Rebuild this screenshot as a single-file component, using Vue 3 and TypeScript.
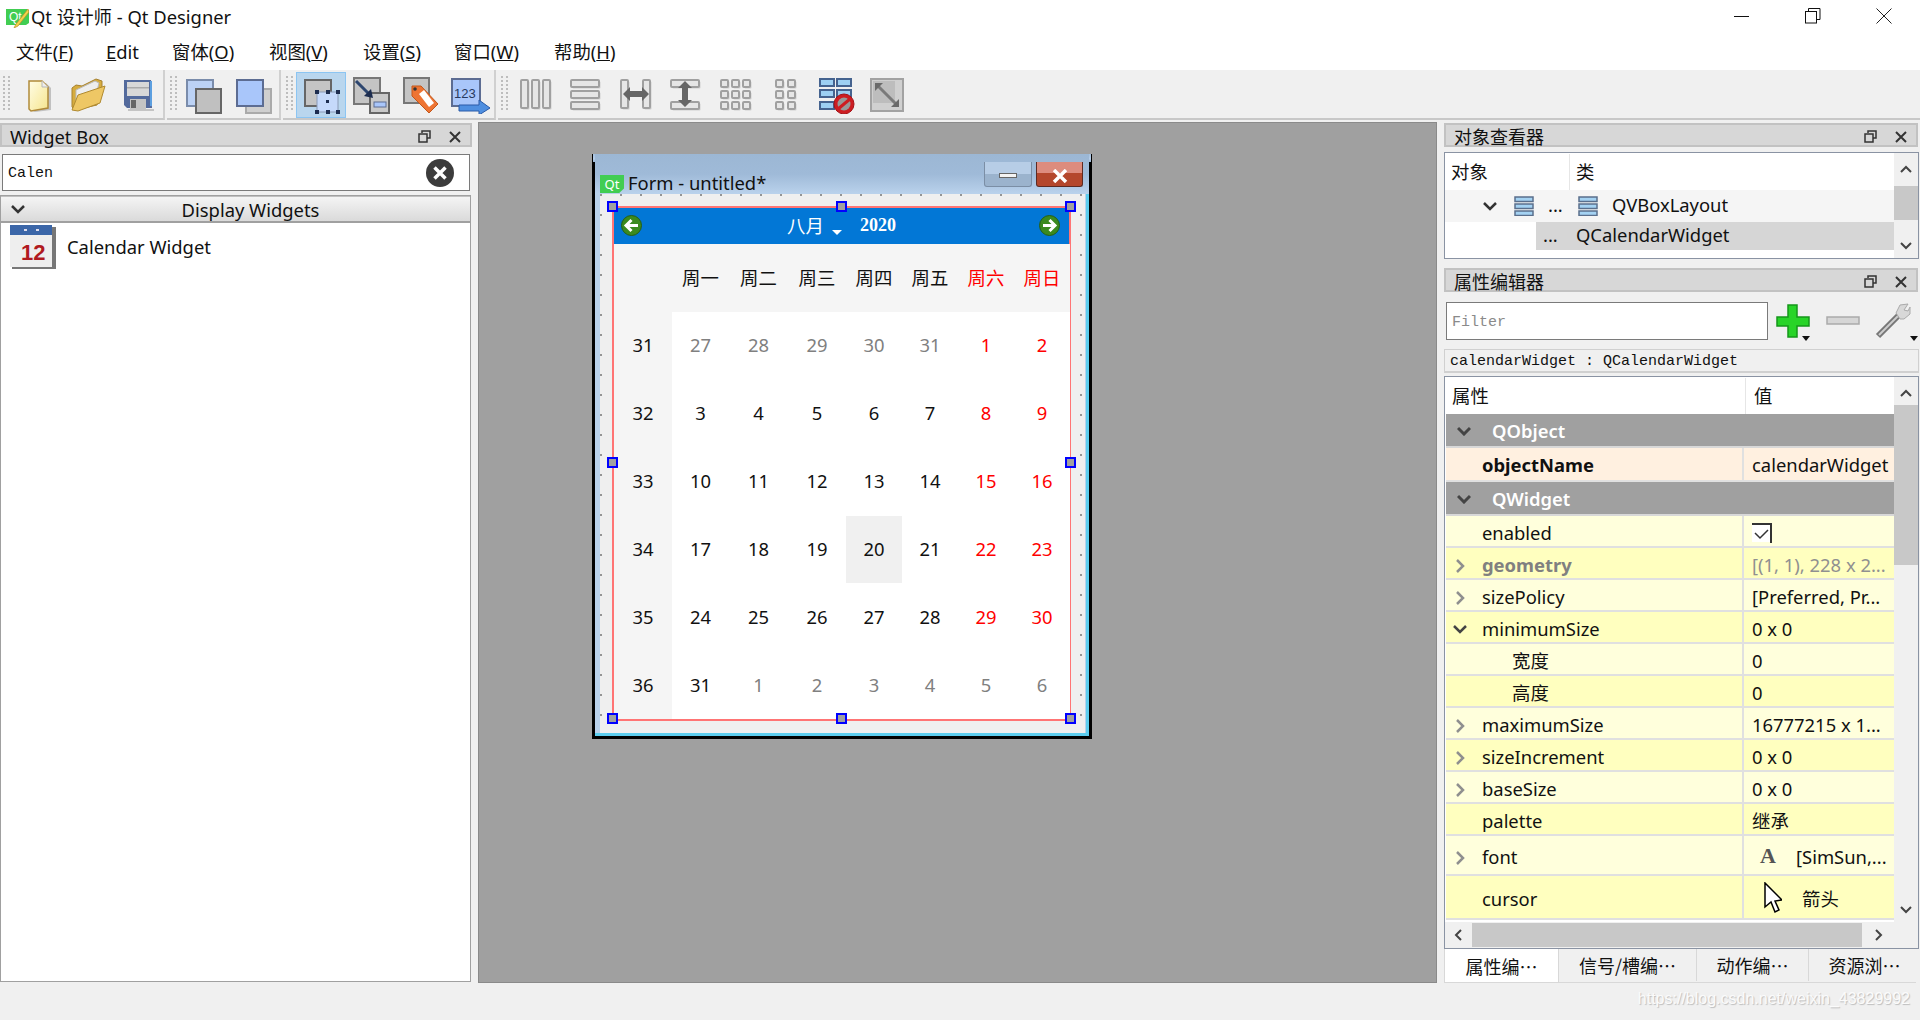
<template>
  <div class="app">
    <header class="titlebar">
      <svg class="app-icon" width="24" height="22" viewBox="0 0 24 22">
        <path d="M1 3h21l2 2v12l-3 2H1z" fill="#41cd52" />
        <text x="4" y="15" font-size="12" fill="#fff" font-family="Liberation Sans, sans-serif">Qt</text>
        <path d="M23 3l-12 15-2 4 4-2L24 6z" fill="#f3d24a" stroke="#b98a2a" stroke-width=".7" />
      </svg>
      <span class="title-text">Qt 设计师 - Qt Designer</span>
      <div class="win-buttons">
        <svg width="16" height="16" viewBox="0 0 16 16"><path d="M0 8.500h15" stroke="#111" stroke-width="1" /></svg>
        <svg width="16" height="16" viewBox="0 0 16 16" fill="none" stroke="#111"><path d="M3.500 3.500V.5h11.500v11h-3" /><rect x=".5" y="3.500" width="11" height="11.500" fill="#fff" /></svg>
        <svg width="16" height="16" viewBox="0 0 16 16"><path d="M.5.5l15 15M15.500.5l-15 15" stroke="#222" stroke-width="1" /></svg>
      </div>
    </header>

    <nav class="menubar">
      <span v-for="m in menus" :key="m.pre + m.key" class="menu-item" :style="{ width: m.w + 'px' }">{{ m.pre }}<u>{{ m.key }}</u>{{ m.post }}</span>
    </nav>

    <div class="toolbars">
      <div class="toolgroup g1">
        <i class="grip"></i>
        <div class="tool">
          <svg width="34" height="38" viewBox="0 0 34 38">
            <defs>
              <linearGradient id="paper" x1="0" y1="0" x2="1" y2="1"><stop offset="0" stop-color="#fffde6" /><stop offset="1" stop-color="#f6e58d" /></linearGradient>
            </defs>
            <path d="M10 6h13l5 5v22l-16 2-2-1z" fill="#888" opacity=".45" transform="translate(2 1)" />
            <path d="M8 5h13l6 6v21l-17 3-2-2z" fill="url(#paper)" stroke="#b08a3a" stroke-width="1.500" />
            <path d="M21 5v6h6" fill="#eee" stroke="#b7b7b7" />
          </svg>
        </div>
        <div class="tool">
          <svg width="38" height="38" viewBox="0 0 38 38">
            <path d="M3 12l4-3 6 1 14-7 6 2v8l-5 16-22 5-3-3z" fill="#d6ac3f" stroke="#a78230" />
            <path d="M7 28V14l19-9 4 2-3 12z" fill="#eee" stroke="#bbb" />
            <path d="M3 34l6-15 27-9-5 17-22 8z" fill="#eec765" stroke="#b08a30" />
          </svg>
        </div>
        <div class="tool">
          <svg width="34" height="38" viewBox="0 0 34 38">
            <path d="M3 4h27l1 28H6l-3-3z" fill="#536a9c" />
            <rect x="6" y="6" width="22" height="14" fill="#d8d8d8" />
            <rect x="6" y="11" width="22" height="1.500" fill="#aaa" />
            <rect x="9" y="23" width="16" height="10" fill="#c4c4c4" />
            <rect x="10" y="24" width="5" height="8" fill="#666" />
            <path d="M29 5h2v25h-2z" fill="#5c9fe0" />
            <path d="M7 34h26" stroke="#999" stroke-width="2" opacity=".5" />
          </svg>
        </div>
      </div>
      <div class="toolgroup g2">
        <i class="grip"></i>
        <div class="tool">
          <svg width="38" height="38" viewBox="0 0 38 38">
            <rect x="3" y="4" width="26" height="26" fill="#bcd2f5" stroke="#7a8cab" stroke-width="2" />
            <rect x="12" y="13" width="25" height="24" fill="#c0c0c0" stroke="#666" stroke-width="2" />
          </svg>
        </div>
        <div class="tool">
          <svg width="38" height="38" viewBox="0 0 38 38">
            <rect x="12" y="13" width="25" height="24" fill="#cfcfcf" stroke="#aaa" stroke-width="2" />
            <rect x="3" y="4" width="26" height="26" fill="#a9c6fa" stroke="#5c6c92" stroke-width="2" />
          </svg>
        </div>
      </div>
      <div class="toolgroup g3">
        <i class="grip"></i>
        <div class="tool active">
          <svg width="38" height="38" viewBox="0 0 38 38">
            <rect x="3" y="4" width="26" height="26" fill="#c4c4c4" stroke="#666" stroke-width="2" />
            <rect x="15" y="16" width="21" height="20" fill="#c5d9fb" stroke="#8a9ab6" />
            <g fill="#1d2d50">
              <rect x="13" y="14" width="4" height="4" /><rect x="24" y="14" width="4" height="4" /><rect x="34" y="14" width="4" height="4" />
              <rect x="13" y="34" width="4" height="4" /><rect x="24" y="34" width="4" height="4" /><rect x="34" y="34" width="4" height="4" />
              <rect x="24" y="24" width="3" height="3" />
            </g>
          </svg>
        </div>
        <div class="tool">
          <svg width="38" height="38" viewBox="0 0 38 38">
            <rect x="2" y="2" width="26" height="26" fill="#c4c4c4" stroke="#777" stroke-width="2" />
            <rect x="18" y="17" width="19" height="20" fill="#c9c9c9" stroke="#666" stroke-width="2" />
            <rect x="22" y="26" width="12" height="5" fill="#a9c6fa" stroke="#5c6c92" />
            <path d="M4 5l13 13" stroke="#2d466f" stroke-width="3" />
            <path d="M12 20l9 2-2-9z" fill="#1d2d50" />
          </svg>
        </div>
        <div class="tool">
          <svg width="38" height="38" viewBox="0 0 38 38">
            <rect x="2" y="2" width="25" height="25" fill="#c4c4c4" stroke="#777" stroke-width="2" />
            <path d="M10 10h9l17 18-9 9-17-17z" fill="#ee7433" stroke="#c2571b" />
            <path d="M17 18l5-4 10 13-5 4z" fill="#fff" />
            <circle cx="13" cy="13" r="1.800" fill="#333" />
          </svg>
        </div>
        <div class="tool">
          <svg width="40" height="38" viewBox="0 0 40 38">
            <rect x="1" y="3" width="28" height="27" fill="#a9c6fa" stroke="#5c6c92" stroke-width="2" />
            <text x="3" y="22" font-size="13" font-family="Liberation Sans, sans-serif" fill="#283a5e">123</text>
            <path d="M8 29h20v-5l11 8-11 7v-4H8z" fill="#4f8fe0" stroke="#2a5ba8" />
          </svg>
        </div>
      </div>
      <div class="toolgroup g4">
        <i class="grip"></i>
        <div v-for="(ic, i) in layoutIcons" :key="i" class="tool">
          <svg width="36" height="36" viewBox="0 0 36 36">
            <g v-for="(r, j) in ic.rects" :key="j">
              <rect :x="r[0] + 1.500" :y="r[1] + 1.500" :width="r[2]" :height="r[3]" rx="1" fill="#cfcfcf" />
              <rect :x="r[0]" :y="r[1]" :width="r[2]" :height="r[3]" rx="1" fill="#e6e6e6" stroke="#a0a0a0" stroke-width="2" />
            </g>
            <path v-if="ic.arrow" :d="ic.arrow" fill="#666" />
          </svg>
        </div>
        <div class="tool">
          <svg width="38" height="38" viewBox="0 0 38 38">
            <g fill="#9dd0f3" stroke="#45638f" stroke-width="2">
              <rect x="3" y="3" width="14" height="7" /><rect x="20" y="3" width="14" height="7" />
              <rect x="3" y="14" width="14" height="7" /><rect x="20" y="14" width="14" height="7" />
              <rect x="3" y="26" width="14" height="7" /><rect x="20" y="26" width="14" height="7" />
            </g>
            <circle cx="27" cy="28" r="10" fill="#cd1d22" stroke="#a51217" />
            <circle cx="27" cy="28" r="6.500" fill="#999" />
            <path d="M21 33l12-10" stroke="#cd1d22" stroke-width="3" />
          </svg>
        </div>
        <div class="tool wide">
          <svg width="36" height="36" viewBox="0 0 36 36">
            <rect x="2" y="2" width="32" height="32" fill="#d0d0d0" stroke="#a2a2a2" stroke-width="2" />
            <rect x="4" y="4" width="22" height="22" fill="#bdbdbd" />
            <path d="M7 7l22 22" stroke="#7a7a7a" stroke-width="3" />
            <path d="M6 6h8l-8 8zM30 30h-8l8-8z" fill="#6a6a6a" />
          </svg>
        </div>
      </div>
    </div>

    <main class="workspace">
      <section class="dock left">
        <div class="dock-title">
          <span>Widget Box</span>
          <span class="dock-actions">
            <svg width="13" height="13" viewBox="0 0 13 13" fill="none" stroke="#333" stroke-width="1.500"><path d="M4 3V1h8v7H9" /><rect x="1" y="4" width="8" height="8" /></svg>
            <svg width="12" height="12" viewBox="0 0 12 12"><path d="M1 1l10 10M11 1L1 11" stroke="#333" stroke-width="2" /></svg>
          </span>
        </div>
        <div class="search">
          <span>Calen</span>
          <svg class="clear" width="28" height="28" viewBox="0 0 28 28">
            <circle cx="14" cy="14" r="14" fill="#3c3c3c" />
            <path d="M8.500 8.500l11 11M19.500 8.500l-11 11" stroke="#fff" stroke-width="3.500" />
          </svg>
        </div>
        <div class="widget-list">
          <div class="category">
            <svg class="chev" width="14" height="10" viewBox="0 0 14 10"><path d="M1 2l6 6 6-6" fill="none" stroke="#333" stroke-width="2.500" /></svg>
            <span>Display Widgets</span>
          </div>
          <div class="widget-item">
            <svg width="46" height="44" viewBox="0 0 46 44">
              <rect x="2" y="2" width="44" height="42" fill="#777" />
              <rect x="0" y="0" width="42" height="42" fill="#eee" />
              <rect x="0" y="0" width="42" height="10" fill="#3b66a8" />
              <rect x="14" y="4" width="3" height="2" fill="#dde" /><rect x="26" y="4" width="3" height="2" fill="#dde" />
              <text x="11" y="35" font-size="22" font-weight="700" fill="#b01a1f" font-family="Liberation Sans, sans-serif">12</text>
            </svg>
            <span class="widget-name">Calendar Widget</span>
          </div>
        </div>
      </section>

      <section class="canvas">
        <div class="form">
          <div class="form-title">
            <span class="qt-badge">Qt</span>
            <span class="form-name">Form - untitled*</span>
            <div class="form-buttons">
              <span class="fbtn min"><i></i></span>
              <span class="fbtn close">
                <svg width="18" height="14" viewBox="0 0 18 14"><path d="M3 1l12 12M15 1L3 13" stroke="#fff" stroke-width="3.500" /></svg>
              </span>
            </div>
          </div>
          <div class="form-body">
            <div class="calendar">
              <div class="cal-nav">
                <svg class="nav-arrow" width="21" height="21" viewBox="0 0 21 21">
                  <circle cx="10.500" cy="10.500" r="10" fill="#3b8a1e" stroke="#265f14" />
                  <path d="M17 10.500H6M10.500 5l-5.500 5.500 5.500 5.500" fill="none" stroke="#fff" stroke-width="3" />
                </svg>
                <div class="nav-center">
                  <span class="month">八月</span>
                  <i class="caret"></i>
                  <span class="year">2020</span>
                </div>
                <svg class="nav-arrow" width="21" height="21" viewBox="0 0 21 21">
                  <circle cx="10.500" cy="10.500" r="10" fill="#3b8a1e" stroke="#265f14" />
                  <path d="M4 10.500h11M10.500 5l5.500 5.500-5.500 5.500" fill="none" stroke="#fff" stroke-width="3" />
                </svg>
              </div>
              <div class="cal-grid">
                <div class="head"></div>
                <div v-for="(d, i) in weekDays" :key="d" class="head" :class="{ red: i > 4 }">{{ d }}</div>
                <template v-for="row in calendarRows" :key="row.week">
                  <div class="week">{{ row.week }}</div>
                  <div
                    v-for="(c, i) in row.days"
                    :key="i"
                    class="day"
                    :class="{ muted: c.off, red: i > 4 && !c.off, today: c.n === 20 }"
                  >{{ c.n }}</div>
                </template>
              </div>
            </div>
            <i v-for="h in handles" :key="h.k" class="handle" :class="h.k"></i>
          </div>
        </div>
      </section>

      <section class="dock right">
        <div class="dock-title">
          <span>对象查看器</span>
          <span class="dock-actions">
            <svg width="13" height="13" viewBox="0 0 13 13" fill="none" stroke="#333" stroke-width="1.500"><path d="M4 3V1h8v7H9" /><rect x="1" y="4" width="8" height="8" /></svg>
            <svg width="12" height="12" viewBox="0 0 12 12"><path d="M1 1l10 10M11 1L1 11" stroke="#333" stroke-width="2" /></svg>
          </span>
        </div>
        <div class="inspector">
          <div class="tree">
            <div class="tree-head"><span class="th-a">对象</span><span class="th-b">类</span></div>
            <div class="tree-row alt">
              <svg class="tree-chev" width="14" height="10" viewBox="0 0 14 10"><path d="M1 2l6 6 6-6" fill="none" stroke="#333" stroke-width="2.500" /></svg>
              <svg class="vbox one" width="20" height="20" viewBox="0 0 20 20"><g fill="#a4d2f2" stroke="#5a6f8c" stroke-width="1.500"><rect x="1" y="1" width="18" height="4.500" /><rect x="1" y="8" width="18" height="4.500" /><rect x="1" y="15" width="18" height="4.500" /></g></svg>
              <span class="dots">...</span>
              <svg class="vbox two" width="20" height="20" viewBox="0 0 20 20"><g fill="#a4d2f2" stroke="#5a6f8c" stroke-width="1.500"><rect x="1" y="1" width="18" height="4.500" /><rect x="1" y="8" width="18" height="4.500" /><rect x="1" y="15" width="18" height="4.500" /></g></svg>
              <span>QVBoxLayout</span>
            </div>
            <div class="tree-row sel"><span class="dots">...</span><span>QCalendarWidget</span></div>
          </div>
          <div class="vscroll">
            <svg width="12" height="8" viewBox="0 0 12 8"><path d="M1 7l5-5 5 5" fill="none" stroke="#444" stroke-width="2" /></svg>
            <div class="track small"><i class="thumb small"></i></div>
            <svg width="12" height="8" viewBox="0 0 12 8"><path d="M1 1l5 5 5-5" fill="none" stroke="#444" stroke-width="2" /></svg>
          </div>
        </div>

        <div class="dock-title second">
          <span>属性编辑器</span>
          <span class="dock-actions">
            <svg width="13" height="13" viewBox="0 0 13 13" fill="none" stroke="#333" stroke-width="1.500"><path d="M4 3V1h8v7H9" /><rect x="1" y="4" width="8" height="8" /></svg>
            <svg width="12" height="12" viewBox="0 0 12 12"><path d="M1 1l10 10M11 1L1 11" stroke="#333" stroke-width="2" /></svg>
          </span>
        </div>
        <div class="filter-row">
          <div class="filter">Filter</div>
          <span class="ficon">
            <svg width="34" height="34" viewBox="0 0 34 34"><path d="M12 1h9v12h12v9H21v11h-9V22H1v-9h11z" fill="#28d428" stroke="#14961a" stroke-width="1.500" /></svg>
            <i class="drop"></i>
          </span>
          <span class="ficon">
            <svg width="34" height="34" viewBox="0 0 34 34"><rect x="1" y="13" width="32" height="7" fill="#d6d6d6" stroke="#aaa" stroke-width="1.500" /></svg>
          </span>
          <span class="ficon">
            <svg width="36" height="36" viewBox="0 0 36 36">
              <path d="M3 33L24 12" stroke="#777" stroke-width="6" />
              <path d="M4 32L23 13" stroke="#ccc" stroke-width="2" />
              <path d="M21 10l4-8 8-1-4 6 4 1 2-4v7l-6 5h-4z" fill="#d8d8d8" stroke="#aaa" />
            </svg>
            <i class="drop"></i>
          </span>
        </div>
        <div class="object-label">calendarWidget : QCalendarWidget</div>
        <div class="props">
          <div class="props-main">
            <div class="props-view">
              <div class="props-head"><span class="ph-a">属性</span><span class="ph-b">值</span></div>
              <template v-for="row in propRows" :key="row.name">
                <div v-if="row.group" class="prow group">
                  <svg class="p-arrow" width="14" height="10" viewBox="0 0 14 10"><path d="M1 2l6 6 6-6" fill="none" stroke="#444" stroke-width="3" /></svg>
                  <span class="gname">{{ row.name }}</span>
                </div>
                <div v-else class="prow" :class="[row.tone, row.cls]">
                  <div class="pname" :class="{ indent: row.indent }">
                    <svg v-if="row.arrow === 'right'" class="p-arrow" width="10" height="14" viewBox="0 0 10 14"><path d="M2 1l6 6-6 6" fill="none" stroke="#8f8f8f" stroke-width="2.500" /></svg>
                    <svg v-if="row.arrow === 'down'" class="p-arrow down" width="14" height="10" viewBox="0 0 14 10"><path d="M1 2l6 6 6-6" fill="none" stroke="#444" stroke-width="2.500" /></svg>
                    <span>{{ row.name }}</span>
                  </div>
                  <div class="pvalue">
                    <svg v-if="row.icon === 'check'" class="check-glyph" width="20" height="20" viewBox="0 0 20 20">
                      <rect width="19" height="19" fill="#fff" />
                      <path d="M0 1h19v19" fill="none" stroke="#333" stroke-width="2" />
                      <path d="M3 10l5 5 8-8" fill="none" stroke="#333" stroke-width="1.500" />
                    </svg>
                    <span v-if="row.icon === 'font'" class="font-glyph">A</span>
                    <svg v-if="row.icon === 'cursor'" class="cursor-glyph" width="18" height="32" viewBox="0 0 18 32">
                      <path d="M1 1v24l6-5 4 10 4-2-4-9 7-1z" fill="#fff" stroke="#000" stroke-width="1.500" />
                    </svg>
                    <span v-if="row.value">{{ row.value }}</span>
                  </div>
                </div>
              </template>
            </div>
            <div class="vscroll tall">
              <svg width="12" height="8" viewBox="0 0 12 8"><path d="M1 7l5-5 5 5" fill="none" stroke="#444" stroke-width="2" /></svg>
              <div class="track"><i class="thumb"></i></div>
              <svg width="12" height="8" viewBox="0 0 12 8"><path d="M1 1l5 5 5-5" fill="none" stroke="#444" stroke-width="2" /></svg>
            </div>
          </div>
          <div class="hscroll">
            <svg width="8" height="12" viewBox="0 0 8 12"><path d="M7 1L2 6l5 5" fill="none" stroke="#444" stroke-width="2" /></svg>
            <div class="hthumb"></div>
            <svg width="8" height="12" viewBox="0 0 8 12"><path d="M1 1l5 5-5 5" fill="none" stroke="#444" stroke-width="2" /></svg>
          </div>
        </div>
        <div class="tabs">
          <span v-for="(t, i) in tabs" :key="t.label" class="tab" :class="{ on: i === 0 }" :style="{ width: t.w + 'px' }">{{ t.label }}</span>
        </div>
      </section>
    </main>

    <footer class="statusbar">
      <span class="watermark">https://blog.csdn.net/weixin_43829992</span>
    </footer>
  </div>
</template>

<script setup lang="ts">
interface PropRow {
  name: string;
  value?: string;
  group?: boolean;
  tone?: string;
  cls?: string;
  arrow?: 'right' | 'down';
  indent?: boolean;
  icon?: string;
}

const menus = [
  { pre: '文件(', key: 'F', post: ')', w: 90 },
  { pre: '', key: 'E', post: 'dit', w: 66 },
  { pre: '窗体(', key: 'O', post: ')', w: 97 },
  { pre: '视图(', key: 'V', post: ')', w: 94 },
  { pre: '设置(', key: 'S', post: ')', w: 91 },
  { pre: '窗口(', key: 'W', post: ')', w: 100 },
  { pre: '帮助(', key: 'H', post: ')', w: 80 },
];

const layoutIcons: { rects: number[][]; arrow?: string }[] = [
  { rects: [[3, 3, 7, 28], [14, 3, 7, 28], [25, 3, 7, 28]] },
  { rects: [[3, 3, 28, 7], [3, 14, 28, 7], [3, 25, 28, 7]] },
  { rects: [[3, 3, 7, 28], [25, 3, 7, 28]], arrow: 'M5 17l7-7v4h12v-4l7 7-7 7v-4H12v4z' },
  { rects: [[3, 3, 28, 7], [3, 25, 28, 7]], arrow: 'M17 4l7 7h-4v12h4l-7 7-7-7h4V11h-4z' },
  { rects: [[3, 3, 7, 7], [14, 3, 7, 7], [25, 3, 7, 7], [3, 14, 7, 7], [14, 14, 7, 7], [25, 14, 7, 7], [3, 25, 7, 7], [14, 25, 7, 7], [25, 25, 7, 7]] },
  { rects: [[8, 3, 7, 7], [20, 3, 7, 7], [8, 14, 7, 7], [20, 14, 7, 7], [8, 25, 7, 7], [20, 25, 7, 7]] },
];

const weekDays = ['周一', '周二', '周三', '周四', '周五', '周六', '周日'];

const mk = (nums: number[], offBefore: number, offAfter = 8) =>
  nums.map((n, i) => ({ n, off: i < offBefore || i >= offAfter }));

const calendarRows = [
  { week: 31, days: [...mk([27, 28, 29, 30, 31], 5), ...mk([1, 2], 0)] },
  { week: 32, days: mk([3, 4, 5, 6, 7, 8, 9], 0) },
  { week: 33, days: mk([10, 11, 12, 13, 14, 15, 16], 0) },
  { week: 34, days: mk([17, 18, 19, 20, 21, 22, 23], 0) },
  { week: 35, days: mk([24, 25, 26, 27, 28, 29, 30], 0) },
  { week: 36, days: mk([31, 1, 2, 3, 4, 5, 6], 0, 1) },
];

const handles = ['tl', 'tm', 'tr', 'ml', 'mr', 'bl', 'bm', 'br'].map((k) => ({ k }));

const propRows: PropRow[] = [
  { name: 'QObject', group: true },
  { name: 'objectName', value: 'calendarWidget', tone: 'peach', cls: 'strong' },
  { name: 'QWidget', group: true },
  { name: 'enabled', tone: 'light', icon: 'check' },
  { name: 'geometry', value: '[(1, 1), 228 x 2...', tone: 'dark', cls: 'disabled', arrow: 'right' },
  { name: 'sizePolicy', value: '[Preferred, Pr...', tone: 'light', arrow: 'right' },
  { name: 'minimumSize', value: '0 x 0', tone: 'dark', arrow: 'down' },
  { name: '宽度', value: '0', tone: 'light', indent: true },
  { name: '高度', value: '0', tone: 'dark', indent: true },
  { name: 'maximumSize', value: '16777215 x 1...', tone: 'light', arrow: 'right' },
  { name: 'sizeIncrement', value: '0 x 0', tone: 'dark', arrow: 'right' },
  { name: 'baseSize', value: '0 x 0', tone: 'light', arrow: 'right' },
  { name: 'palette', value: '继承', tone: 'dark' },
  { name: 'font', value: '[SimSun,...', tone: 'light', cls: 'tall-font', arrow: 'right', icon: 'font' },
  { name: 'cursor', value: '箭头', tone: 'dark', cls: 'tall-cursor', icon: 'cursor' },
];

const tabs = [
  { label: '属性编…', w: 115 },
  { label: '信号/槽编…', w: 138 },
  { label: '动作编…', w: 112 },
  { label: '资源浏…', w: 107 },
];
</script>

<style scoped>
.app {
  width: 1920px;
  height: 1020px;
  display: flex;
  flex-direction: column;
  background: #f0f0f0;
  font-family: "Noto Sans", "Noto Sans CJK SC", sans-serif;
  font-size: 18.4px;
  color: #111;
  overflow: hidden;
}

.titlebar {
  height: 34px;
  flex: none;
  display: flex;
  align-items: center;
  background: #fff;
  padding-left: 5px;
}
.app-icon { margin-right: 2px; }
.title-text { line-height: 34px; }
.win-buttons {
  margin-left: auto;
  display: flex;
  gap: 55px;
  padding-right: 28px;
  margin-top: -2px;
}

.menubar {
  height: 36px;
  flex: none;
  display: flex;
  align-items: center;
  background: #fff;
  padding: 0 0 2px 16px;
  box-sizing: border-box;
}
.menu-item { display: block; flex: none; }

.toolbars {
  height: 50px;
  flex: none;
  display: flex;
  gap: 2px;
  background: #f0f0f0;
}
.toolgroup {
  display: flex;
  align-items: center;
  position: relative;
  box-sizing: border-box;
  padding-top: 2px;
  border-bottom: 2px solid #c8c8c8;
  border-right: 2px solid #d0d0d0;
}
.g1 { width: 165px; padding-left: 13px; }
.g2 { width: 114px; padding-left: 11px; }
.g3 { width: 213px; padding-left: 13px; }
.g4 { flex: 1; padding-left: 13px; border-right: none; }
.grip {
  position: absolute;
  left: 3px;
  top: 6px;
  width: 9px;
  height: 36px;
  background-image: radial-gradient(circle at 1px 1px, #bdbdbd 1px, transparent 1.300px);
  background-size: 5px 4px;
}
.tool {
  width: 50px;
  height: 46px;
  display: flex;
  align-items: center;
  justify-content: center;
  flex: none;
  box-sizing: border-box;
}
.tool.active {
  background: #b9d6ee;
  border: 1px solid #8cc5f2;
}
.tool.wide { width: 52px; }

.workspace {
  height: 861px;
  flex: none;
  margin-top: 2px;
  display: flex;
  gap: 6px;
}

.dock {
  flex: none;
  display: flex;
  flex-direction: column;
  padding-top: 1px;
  box-sizing: border-box;
}
.dock.left { width: 472px; }
.dock.right { width: 476px; margin-left: 1px; }
.dock-title {
  height: 24px;
  flex: none;
  box-sizing: border-box;
  display: flex;
  align-items: center;
  background: #d7d7d7;
  border: 2px solid #c2c2c2;
  padding: 3px 0 0 8px;
  line-height: 18px;
}
.dock.right .dock-title { margin-right: 2px; font-size: 18px; }
.dock-actions {
  margin-left: auto;
  display: flex;
  align-items: center;
  gap: 18px;
  padding-right: 9px;
}

.search {
  height: 37px;
  margin: 7px 2px 4px;
  box-sizing: border-box;
  border: 1px solid #7a7a7a;
  background: #fff;
  position: relative;
  display: flex;
  align-items: center;
  padding: 2px 0 0 5px;
  font-family: "Liberation Mono", monospace;
  font-size: 15px;
}
.clear { position: absolute; right: 15px; top: 4px; }

.widget-list {
  flex: 1;
  border: 1px solid #a0a0a0;
  background: #fff;
  margin-bottom: 1px;
  margin-right: 1px;
}
.category {
  height: 27px;
  position: relative;
  display: flex;
  align-items: center;
  justify-content: center;
  background: linear-gradient(#f4f4f4, #dadada);
  border-top: 1px solid #c0c0c0;
  border-bottom: 2px solid #a0a0a0;
  box-sizing: border-box;
  padding-left: 30px;
}
.chev { position: absolute; left: 10px; top: 7px; }
.widget-item {
  display: flex;
  align-items: center;
  gap: 11px;
  padding: 2px 0 0 9px;
}
.widget-name { margin-top: -2px; }

.canvas {
  width: 959px;
  flex: none;
  position: relative;
  background: #a0a0a0;
  border: 1px solid #8a8a8a;
  box-sizing: border-box;
}

.form {
  position: absolute;
  left: 113px;
  top: 31px;
  width: 500px;
  height: 585px;
  box-sizing: border-box;
  display: flex;
  flex-direction: column;
  background: #b9d1ea;
  border-bottom: 3px solid #000;
  border-left: 3px solid #000;
  border-right: 3px solid #000;
  box-shadow: inset -3px -3px 0 #5ccdee;
}
.form::before {
  content: "";
  position: absolute;
  left: -2px;
  right: -2px;
  top: 0;
  height: 8px;
  background: linear-gradient(#a5c0de, #b6cde8 60%, #9cb7d4);
}
.form-title {
  height: 40px;
  flex: none;
  padding: 0 6px 0 5px;
  display: flex;
  align-items: flex-end;
  background: linear-gradient(#9cb7d4 0, #9fbad8 50%, #bad2ec 100%);
  position: relative;
}
.qt-badge {
  width: 24px;
  height: 18px;
  background: #41cd52;
  color: #fff;
  font-size: 13px;
  line-height: 18px;
  text-align: center;
  margin-bottom: 1px;
  clip-path: polygon(0 0, 100% 0, 100% 75%, 80% 100%, 0 100%, 0 20%);
}
.form-name {
  margin: 0 0 -1px 4px;
  line-height: 24px;
}
.form-buttons {
  margin-left: auto;
  align-self: flex-start;
  display: flex;
  gap: 4px;
  margin-top: 8px;
}
.fbtn {
  height: 25px;
  box-sizing: border-box;
  display: flex;
  align-items: center;
  justify-content: center;
  border-radius: 0 0 3px 3px;
  padding-top: 3px;
}
.fbtn.min {
  width: 48px;
  border: 1px solid #7b8ea5;
  border-top: 0;
  background: linear-gradient(#b7cde6 0 50%, #9bb3cd 50% 100%);
}
.fbtn.min i {
  width: 18px;
  height: 5px;
  background: #f3f3f3;
  border: 1px solid #666;
  box-sizing: border-box;
}
.fbtn.close {
  width: 47px;
  border: 1px solid #5d2a22;
  border-top: 0;
  background: linear-gradient(#dd8c7e 0 45%, #b4472c 45% 100%);
}

.form-body {
  flex: 1;
  position: relative;
  margin: 0 4px 3px 5px;
  padding: 12px 14px 12px 12px;
  background-color: #efefef;
  background-image: radial-gradient(circle at 1px 1px, #949494 .8px, transparent 1.200px);
  background-size: 20px 20px;
  display: flex;
}
.calendar {
  flex: 1;
  box-sizing: border-box;
  border: 2px solid #ff7474;
  background: #fff;
  display: flex;
  flex-direction: column;
  min-width: 0;
}
.cal-nav {
  height: 36px;
  flex: none;
  background: #0277d6;
  display: flex;
  align-items: center;
  justify-content: space-between;
  padding: 0 9px 2px 7px;
  box-sizing: border-box;
  color: #fff;
}
.nav-center {
  display: flex;
  align-items: center;
  position: relative;
  left: 1px;
}
.caret {
  display: block;
  margin: 15px 0 0 8px;
  width: 0;
  height: 0;
  border: 5px solid transparent;
  border-top: 5px solid #fff;
  border-bottom: 0;
}
.year {
  margin-left: 18px;
  font-family: "Liberation Serif", serif;
  font-weight: 700;
  font-size: 18px;
}
.cal-grid {
  flex: 1;
  display: grid;
  grid-template-columns: 58px 57px 59px 58px 56px 56px 56px 56px;
  grid-template-rows: 68px repeat(6, 1fr);
  min-height: 0;
}
.head, .week {
  background: #f5f5f5;
  display: flex;
  align-items: center;
  justify-content: center;
  padding-bottom: 2px;
}
.head.red, .day.red { color: #f00; }
.day {
  display: flex;
  align-items: center;
  justify-content: center;
  background: #fff;
  padding-bottom: 2px;
}
.day.muted { color: #808080; }
.day.today { background: #f0f0f0; }

.handle {
  position: absolute;
  width: 11px;
  height: 11px;
  box-sizing: border-box;
  background: #a0a0a0;
  border: 2px solid #0000ff;
}
.tl, .tm, .tr { top: 7px; }
.ml, .mr { top: 263px; }
.bl, .bm, .br { bottom: 9px; }
.tl, .ml, .bl { left: 7px; }
.tm, .bm { left: 236px; }
.tr, .mr, .br { right: 9px; }

.inspector {
  height: 107px;
  flex: none;
  margin: 5px 1px 9px 0;
  box-sizing: border-box;
  border: 1px solid #8a93a3;
  background: #fff;
  display: flex;
}
.tree { flex: 1; min-width: 0; }
.tree-head {
  height: 36px;
  display: flex;
  align-items: center;
  margin-top: 1px;
}
.th-a { width: 125px; padding-left: 6px; box-sizing: border-box; border-right: 1px solid #e6e6e6; height: 100%; line-height: 36px; }
.th-b { padding-left: 6px; line-height: 36px; }
.tree-row { display: flex; align-items: center; position: relative; }
.tree-row.alt { height: 32px; background: #f5f5f5; }
.tree-row.sel {
  height: 28px;
  margin-left: 91px;
  background: #d6d6d6;
  padding: 0 0 4px 7px;
  box-sizing: border-box;
}
.tree-row.sel .dots { width: 33px; }
.tree-chev { position: absolute; left: 38px; top: 11px; }
.vbox.one { position: absolute; left: 69px; top: 6px; }
.vbox.two { position: absolute; left: 133px; top: 6px; }
.tree-row.alt .dots { position: absolute; left: 103px; top: 2px; }
.tree-row.alt span:last-child { position: absolute; left: 167px; top: 2px; }

.vscroll {
  width: 24px;
  flex: none;
  display: flex;
  flex-direction: column;
  align-items: center;
  padding-top: 12px;
  padding-bottom: 8px;
  gap: 8px;
  background: #f0f0f0;
  box-sizing: border-box;
}
.track { flex: 1; width: 100%; position: relative; }
.thumb {
  position: absolute;
  left: 0;
  right: 0;
  top: 0;
  height: 160px;
  background: #c8c8c8;
}
.thumb.small { height: 34px; top: 5px; }

.filter-row {
  height: 44px;
  flex: none;
  margin: 7px 0 6px 2px;
  display: flex;
  align-items: center;
}
.filter {
  width: 322px;
  height: 38px;
  flex: none;
  box-sizing: border-box;
  border: 1px solid #7a7a7a;
  background: #fff;
  color: #8a8a8a;
  font-family: "Liberation Mono", monospace;
  font-size: 15px;
  line-height: 38px;
  padding: 1px 0 0 5px;
}
.ficon {
  width: 50px;
  height: 40px;
  flex: none;
  position: relative;
  display: flex;
  align-items: center;
  justify-content: center;
}
.drop {
  position: absolute;
  right: 8px;
  bottom: 0;
  border: 4px solid transparent;
  border-top: 5px solid #111;
  border-bottom: 0;
}
.ficon:last-child .drop { right: 0; }
.object-label {
  height: 24px;
  flex: none;
  margin: 0 1px 3px 0;
  box-sizing: border-box;
  border: 1px solid #d0d0d0;
  border-width: 1px 1px 2px 1px;
  padding: 1px 0 0 5px;
  font-family: "Liberation Mono", monospace;
  font-size: 15px;
  line-height: 22px;
}

.props {
  flex: none;
  height: 573px;
  margin-right: 1px;
  box-sizing: border-box;
  border: 1px solid #8a93a3;
  background: #f0f0f0;
  display: flex;
  flex-direction: column;
}
.props-main { flex: 1; display: flex; min-height: 0; }
.props-view { flex: 1; min-width: 0; overflow: hidden; padding: 1px 0 0 1px; background: #fff; }
.props-head {
  height: 36px;
  display: flex;
  background: #fff;
}
.ph-a { width: 300px; box-sizing: border-box; padding-left: 6px; line-height: 36px; border-right: 1px solid #e6e6e6; }
.ph-b { padding-left: 8px; line-height: 36px; }
.prow {
  height: 32px;
  display: flex;
  position: relative;
  box-sizing: border-box;
  border-bottom: 2px solid #e0e0e0;
}
.prow.group {
  height: 34px;
  background: #a0a0a0;
  color: #fff;
  font-weight: 600;
  align-items: center;
  border-bottom: 2px solid #d8d8d8;
}
.gname { margin-left: 46px; }
.group .p-arrow { position: absolute; left: 11px; top: 12px; }
.prow.peach { height: 34px; background: #fff0e0; }
.prow.peach .pname, .prow.peach .pvalue { padding-top: 0; }
.prow.light { background: #ffffdc; }
.prow.dark { background: #ffffbf; }
.pname {
  width: 298px;
  flex: none;
  padding: 2px 0 0 36px;
  box-sizing: border-box;
  display: flex;
  align-items: center;
  position: relative;
  border-right: 2px solid #e0e0e0;
}
.pname.indent { padding-left: 66px; }
.pname .p-arrow { position: absolute; left: 9px; top: 11px; }
.pname .p-arrow.down { left: 7px; top: 12px; }
.pvalue {
  flex: 1;
  min-width: 0;
  padding: 2px 0 0 8px;
  display: flex;
  align-items: center;
  white-space: nowrap;
  overflow: hidden;
}
.strong .pname { font-weight: 700; }
.disabled .pname { font-weight: 700; color: #808080; }
.disabled .pvalue { color: #909090; }
.tall-font { height: 40px; }
.tall-font .pname .p-arrow { top: 15px; }
.tall-cursor { height: 44px; }
.check-glyph { margin-top: 2px; }
.font-glyph {
  width: 44px;
  padding-left: 8px;
  box-sizing: border-box;
  font-family: "Liberation Serif", serif;
  font-weight: 700;
  font-size: 22px;
  color: #555;
}
.cursor-glyph { margin: 0 20px 0 12px; }

.vscroll.tall { padding-top: 12px; padding-bottom: 8px; }

.hscroll {
  height: 26px;
  flex: none;
  display: flex;
  align-items: center;
  padding: 0 26px 0 9px;
  gap: 10px;
  background: #f0f0f0;
}
.hthumb {
  width: 390px;
  height: 24px;
  background: #c8c8c8;
}
.hscroll svg:last-child { margin-left: 3px; }

.tabs {
  height: 34px;
  flex: none;
  display: flex;
  border-bottom: 1px solid #d8d8d8;
  margin-right: 4px;
  font-family: "Noto Sans CJK SC", sans-serif;
  font-size: 18px;
  box-sizing: border-box;
}
.tab {
  display: flex;
  align-items: center;
  justify-content: center;
  box-sizing: border-box;
  border-right: 1px solid #d8d8d8;
  height: 32px;
  white-space: nowrap;
}
.tab:last-child { padding-left: 4px; border-right: none; }
.tab.on {
  background: #fff;
  height: 34px;
  border: 1px solid #d8d8d8;
  border-top: 0;
}

.statusbar {
  flex: 1;
  position: relative;
}
.watermark {
  position: absolute;
  right: 10px;
  top: 7px;
  font-family: "Liberation Sans", sans-serif;
  font-size: 16px;
  color: #fbfbfb;
  text-shadow: 1px 1px 1px #bcbcbc;
  white-space: nowrap;
}
</style>

<style>
html, body { margin: 0; overflow: hidden; }
</style>
